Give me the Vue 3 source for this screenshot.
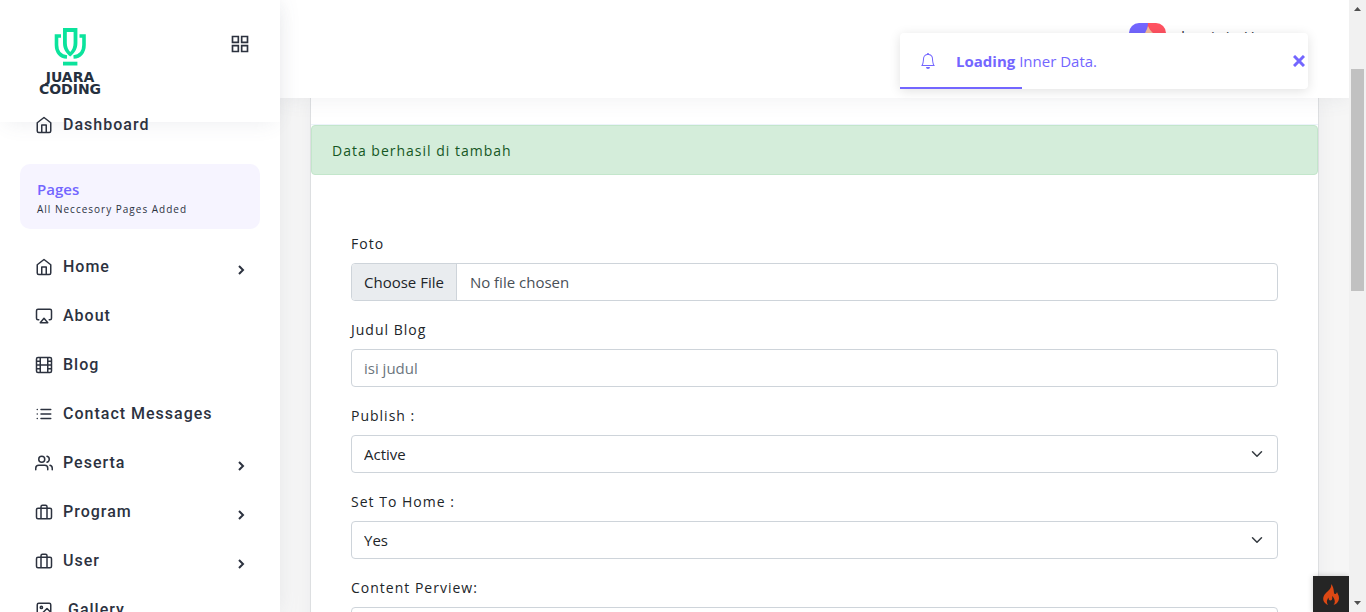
<script setup>
const items = [
  { text: 'Home', icon: 'home', more: true },
  { text: 'About', icon: 'airplay' },
  { text: 'Blog', icon: 'film' },
  { text: 'Contact Messages', icon: 'list' },
  { text: 'Peserta', icon: 'users', more: true },
  { text: 'Program', icon: 'briefcase', more: true },
  { text: 'User', icon: 'briefcase', more: true },
  { text: 'Gallery', icon: 'image', inset: true }
]
const icons = {
  home: 'M3 9l9-7 9 7v11a2 2 0 0 1-2 2H5a2 2 0 0 1-2-2zM9 22V12h6v10',
  airplay: 'M5 17H4a2 2 0 0 1-2-2V5a2 2 0 0 1 2-2h16a2 2 0 0 1 2 2v10a2 2 0 0 1-2 2h-1M12 15l5 6H7z',
  film: 'M4 2h16a2 2 0 0 1 2 2v16a2 2 0 0 1-2 2H4a2 2 0 0 1-2-2V4a2 2 0 0 1 2-2zM7 2v20M17 2v20M2 12h20M2 7h5M2 17h5M17 17h5M17 7h5',
  list: 'M8 6h13M8 12h13M8 18h13M3 6h.01M3 12h.01M3 18h.01',
  users: 'M17 21v-2a4 4 0 0 0-4-4H5a4 4 0 0 0-4 4v2M9 3a4 4 0 1 0 0 8 4 4 0 0 0 0-8zM23 21v-2a4 4 0 0 0-3-3.87M16 3.13a4 4 0 0 1 0 7.75',
  briefcase: 'M4 7h16a2 2 0 0 1 2 2v10a2 2 0 0 1-2 2H4a2 2 0 0 1-2-2V9a2 2 0 0 1 2-2zM16 21V5a2 2 0 0 0-2-2h-4a2 2 0 0 0-2 2v16',
  image: 'M5 3h14a2 2 0 0 1 2 2v14a2 2 0 0 1-2 2H5a2 2 0 0 1-2-2V5a2 2 0 0 1 2-2zM8.5 7a1.5 1.5 0 1 0 0 3 1.5 1.5 0 0 0 0-3zM21 15l-5-5L5 21'
}
</script>

<template>
  <div class="page">
    <aside class="sidebar">
      <div class="brand">
        <a href="#" class="logo" aria-label="Juara Coding">
          <svg width="32" height="38" viewBox="54 28 32 38">
            <path fill="#0be39c" fill-rule="evenodd" d="M63 28H77.400V43C77.400 49 74.500 53 70.200 56.500C66 53 63 49 63 43ZM66.800 32V43C66.800 47 68.300 49.800 70.200 52C72.200 49.800 73.600 47 73.600 43V32Z" />
            <path fill="none" stroke="#0be39c" stroke-width="3.600" d="M61 36H56.500V45C56.500 52 60.500 56.500 67 57M79.500 36H84V45C84 52 80 56.500 73.500 57" />
            <path fill="#0be39c" d="M63 61.700H77.400V65.500H63Z" />
          </svg>
          <span>JUARA</span>
          <span>CODING</span>
        </a>
        <button class="grid-button" aria-label="Toggle sidebar">
          <svg width="20" height="20" viewBox="0 0 24 24" fill="none" stroke="currentColor" stroke-width="2"><path d="M3 3h7v7H3zM14 3h7v7h-7zM14 14h7v7h-7zM3 14h7v7H3z" /></svg>
        </button>
      </div>
      <nav class="nav">
        <a href="#" class="item">
          <svg class="icon" viewBox="0 0 24 24"><path :d="icons.home" /></svg>
          <span>Dashboard</span>
        </a>
        <div class="section">
          <strong>Pages</strong>
          <small>All Neccesory Pages Added</small>
        </div>
        <a v-for="item in items" :key="item.text" href="#" class="item">
          <svg class="icon" viewBox="0 0 24 24"><path :d="icons[item.icon]" /></svg>
          <span :class="{ inset: item.inset }">{{ item.text }}</span>
          <svg v-if="item.more" class="arrow" viewBox="0 0 8 10"><path d="M2 1l4 4-4 4" /></svg>
        </a>
      </nav>
    </aside>

    <main class="main">
      <header class="topbar">
        <div class="profile">
          <svg width="37" height="37" viewBox="0 0 37 37">
            <defs><clipPath id="avatar"><rect width="37" height="37" rx="10" /></clipPath></defs>
            <g clip-path="url(#avatar)">
              <path fill="#7366ff" d="M0 0H19V37H0z" />
              <path fill="#ff5261" d="M19 0H37V37H15z" />
              <path fill="#f4bd9b" d="M19 3C18 7 16 9 15 13v10h13V13C25 11 21 8 19 3z" />
            </g>
          </svg>
          <span>dominic Hu</span>
        </div>
      </header>
      <section class="content">
        <div class="card">
          <div class="card-head"></div>
          <div class="alert" role="alert">Data berhasil di tambah</div>
          <form class="form">
            <div class="field">
              <label for="foto">Foto</label>
              <input id="foto" type="file" class="control file" />
            </div>
            <div class="field">
              <label for="judul">Judul Blog</label>
              <input id="judul" type="text" class="control" placeholder="isi judul" />
            </div>
            <div class="field">
              <label for="publish">Publish :</label>
              <div class="select">
                <select id="publish" class="control"><option>Active</option></select>
                <svg class="caret" viewBox="0 0 16 16"><path d="M2 5l6 6 6-6" /></svg>
              </div>
            </div>
            <div class="field">
              <label for="home">Set To Home :</label>
              <div class="select">
                <select id="home" class="control"><option>Yes</option></select>
                <svg class="caret" viewBox="0 0 16 16"><path d="M2 5l6 6 6-6" /></svg>
              </div>
            </div>
            <div class="field">
              <label for="preview">Content Perview:</label>
              <textarea id="preview" class="control"></textarea>
            </div>
          </form>
        </div>
      </section>

      <div class="toast" role="status">
        <svg class="bell" viewBox="0 0 16 16"><path d="M8 16a2 2 0 0 0 2-2H6a2 2 0 0 0 2 2zM8 1.918l-.797.161A4.002 4.002 0 0 0 4 6c0 .628-.134 2.197-.459 3.742-.16.767-.376 1.566-.663 2.258h10.244c-.287-.692-.502-1.490-.663-2.258C12.134 8.197 12 6.628 12 6a4.002 4.002 0 0 0-3.203-3.920L8 1.917zM14.220 12c.223.447.481.801.780 1H1c.299-.199.557-.553.780-1C2.680 10.200 3 6.880 3 6c0-2.420 1.720-4.440 4.005-4.901a1 1 0 1 1 1.990 0A5.002 5.002 0 0 1 13 6c0 .880.320 4.200 1.220 6z" /></svg>
        <p><strong>Loading</strong> Inner Data.</p>
        <button class="close" aria-label="Close"><svg width="12" height="12" viewBox="0 0 12 12"><path d="M1 1l10 10M11 1L1 11" /></svg></button>
        <div class="progress"></div>
      </div>
      <button class="debug" aria-label="Debug toolbar">
        <svg width="16" height="21" viewBox="0 0 16 21"><path fill="#dd4814" d="M8 0C9 4 6 6 3 9C0 12-1 16 2 19C3 20 4 20.500 5 21C3 18 4 16 5.500 13.500C5.500 15.500 6 16.500 7.500 16.500C9.500 16.500 9.500 14 9 12C11.500 14 13 18 10.500 21C14 20 16 17 16 14C16 11 14.500 10 14 8C13.500 9.500 13 10 12 10C10 10 12 4 8 0Z" /></svg>
      </button>
    </main>

    <div class="scrollbar" aria-hidden="true">
      <svg width="9" height="5" viewBox="0 0 9 5"><path d="M1 5l3.500-4L8 5z" /></svg>
      <div class="thumb"></div>
      <svg width="9" height="5" viewBox="0 0 9 5" class="down"><path d="M1 0l3.500 4L8 0z" /></svg>
    </div>
  </div>
</template>

<style>
body { margin: 0; overflow: hidden; }
</style>

<style scoped>
* { box-sizing: border-box; }
.page { display: flex; height: 100vh; overflow: hidden; background: #f6f6f6; color: #212529; font: 15px/24px "Open Sans", "Noto Sans", sans-serif; }
a { color: inherit; text-decoration: none; }
button { padding: 0; border: 0; background: none; cursor: pointer; }
svg { display: block; flex: none; }

.sidebar { position: relative; z-index: 2; flex: 0 0 280px; background: #fff; box-shadow: 0 0 20px rgba(89, 102, 122, 0.1); }
.brand { display: flex; justify-content: space-between; align-items: flex-start; height: 122px; padding: 28px 30px 0 34px; box-shadow: 0 6px 20px -6px rgba(89, 102, 122, 0.12); }
.logo { display: flex; flex-direction: column; align-items: center; width: 72px; color: #25303e; font: bold 14px/12px "DejaVu Sans", sans-serif; }
.logo svg { margin-bottom: 5px; }
.grid-button { margin-top: 6px; color: #2c323f; }
.nav { position: relative; margin-top: -22px; padding: 0 20px; color: #2c323f; font: 500 16px/24px Roboto, sans-serif; letter-spacing: 1px; }
.item { display: flex; align-items: center; gap: 10px; height: 49px; padding: 0 15px; }
.icon { width: 18px; height: 18px; fill: none; stroke: currentColor; stroke-width: 2; stroke-linecap: round; stroke-linejoin: round; }
.arrow { width: 8px; height: 10px; margin: 6px 0 0 auto; fill: none; stroke: currentColor; stroke-width: 2; }
.inset { padding-left: 5px; }
.section { margin: 15px 0 13px; padding: 14px 17px 13px; border-radius: 10px; background: #f6f4ff; font-family: "Open Sans", sans-serif; }
.section strong { display: block; color: #7366ff; font-size: 15px; font-weight: 600; line-height: 22px; letter-spacing: 0; }
.section small { display: block; margin-top: 2px; font-size: 10px; font-weight: 400; line-height: 14px; }

.main { position: relative; display: flex; flex: 1; flex-direction: column; min-width: 0; }
.topbar { position: relative; z-index: 1; flex: 0 0 98px; padding: 23px 83px 0; background: #fff; box-shadow: 0 0 20px rgba(89, 102, 122, 0.1); }
.profile { display: flex; justify-content: flex-end; gap: 10px; color: #2c323f; line-height: 26px; letter-spacing: 1px; }
.content { flex: 1; min-height: 0; padding: 0 30px; }
.card { min-height: 100%; border: 1px solid #dddfe1; border-width: 0 1px; background: #fff; box-shadow: 0 0 20px rgba(8, 21, 66, 0.05); }
.card-head { height: 27px; border-bottom: 1px solid #ecf3fa; }
.alert { padding: 13px 20px 11px; border: 1px solid #c3e6cb; border-radius: 4px; background: #d4edda; color: #155724; font-size: 14px; letter-spacing: 1px; }
.form { padding: 57px 40px 0; }
.field { margin-bottom: 17px; }
.field label { display: block; margin-bottom: 7px; font-size: 14px; letter-spacing: 1px; }
.control { display: block; width: 100%; height: 38px; padding: 6px 12px; border: 1px solid #ced4da; border-radius: 4px; outline: 0; background: #fff; color: #212529; font: inherit; appearance: none; }
.control::placeholder { color: #6c757d; opacity: 1; }
textarea.control { height: 120px; resize: none; }
.file { color: #495057; overflow: hidden; }
.file::file-selector-button { height: 38px; margin: -7px 13px -7px -12px; padding: 0 12px; border: 0; border-right: 1px solid #ced4da; background: #e9ecef; color: #212529; font: inherit; }
.select { position: relative; }
.caret { position: absolute; top: 13px; right: 15px; width: 12px; height: 12px; fill: none; stroke: #343a40; stroke-width: 2; stroke-linecap: round; stroke-linejoin: round; pointer-events: none; }

.toast { position: absolute; z-index: 3; top: 33px; right: 41px; display: flex; align-items: center; width: 408px; height: 56px; padding: 0 3px 0 20px; border-radius: 4px; background: #fff; color: #7366ff; box-shadow: 0 2px 12px rgba(0, 0, 0, 0.12); }
.bell { width: 16px; height: 16px; fill: currentColor; }
.toast p { margin: 0 auto 0 20px; }
.close { color: inherit; }
.close path { fill: none; stroke: currentColor; stroke-width: 3; }
.progress { position: absolute; bottom: 0; left: 0; width: 30%; height: 2px; background: #7366ff; }
.debug { position: absolute; z-index: 3; right: 0; bottom: 0; display: grid; place-items: center; width: 36px; height: 36px; background: #252525; box-shadow: 0 0 6px rgba(0, 0, 0, 0.2); }

.scrollbar { position: relative; z-index: 4; display: flex; flex: 0 0 17px; flex-direction: column; align-items: center; padding: 6px 0; background: #f1f1f1; fill: #505050; }
.thumb { width: 13px; height: 222px; margin-top: 58px; background: #c1c1c1; }
.down { margin-top: auto; }
</style>
